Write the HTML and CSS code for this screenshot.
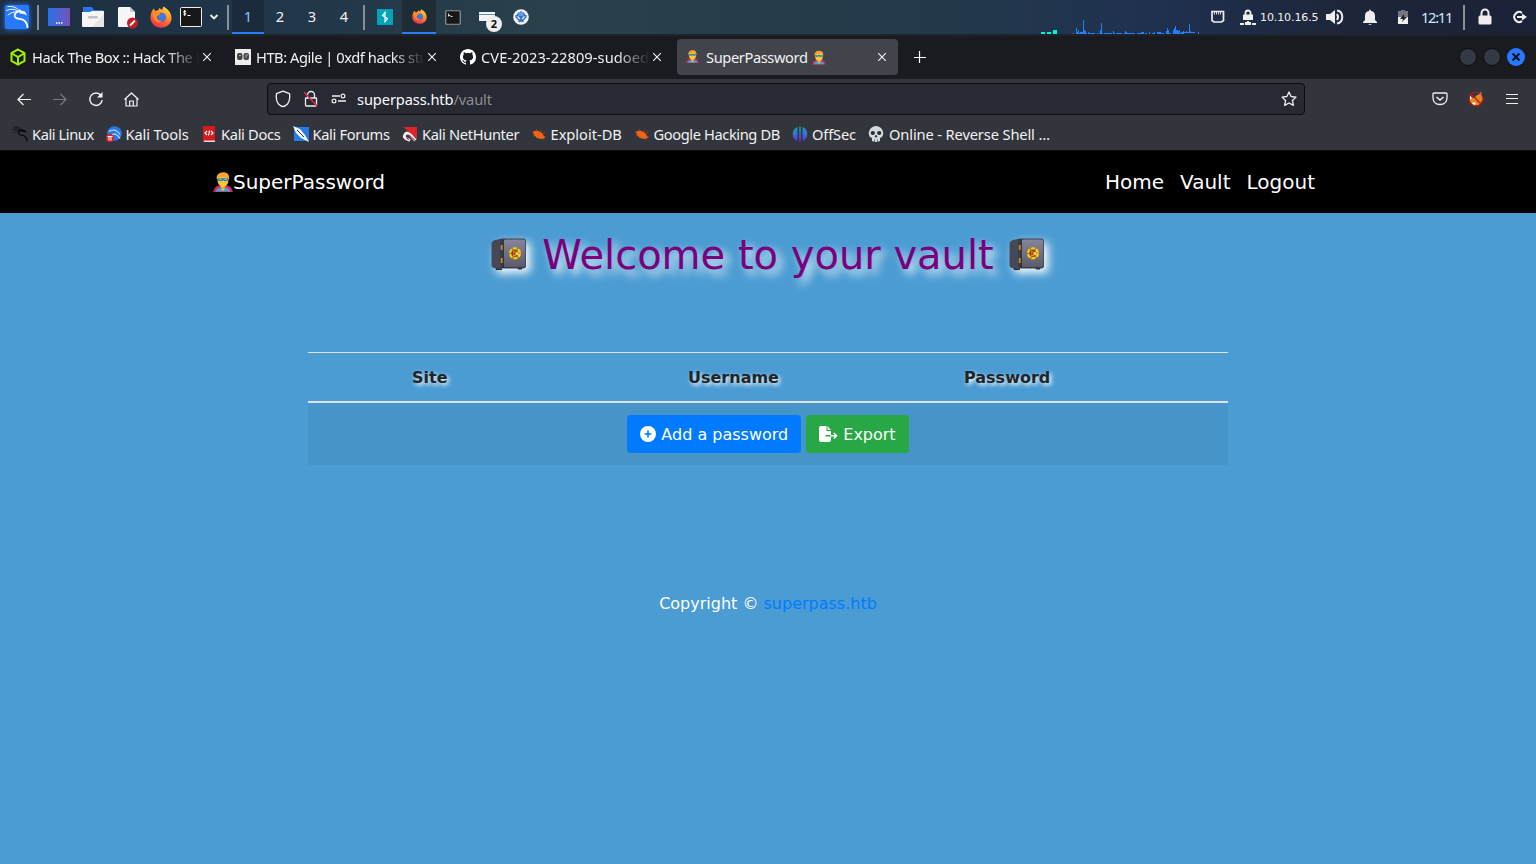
FILE: index.html
```html
<!DOCTYPE html>
<html lang="en">
<head>
<meta charset="utf-8">
<title>SuperPassword</title>
<link rel="stylesheet" href="styles.css">
</head>
<body>
<svg class="defs" aria-hidden="true">
  <defs>
    <linearGradient id="desk"><stop stop-color="#2872e8"/><stop offset="1" stop-color="#7752b8"/></linearGradient>
    <linearGradient id="fire" x1=".8" y1="0" x2=".3" y2="1"><stop stop-color="#ffe040"/><stop offset=".45" stop-color="#ff8b22"/><stop offset="1" stop-color="#ee2852"/></linearGradient>
    <linearGradient id="off" x1="0" y1="0" x2="0" y2="1"><stop stop-color="#1c9ba8"/><stop offset=".5" stop-color="#3276d2"/><stop offset="1" stop-color="#6c20d8"/></linearGradient>
    <linearGradient id="metal" x1="0" y1="0" x2="0" y2="1"><stop stop-color="#85869a"/><stop offset="1" stop-color="#5a5b6b"/></linearGradient>
  </defs>
  <symbol id="dragon" viewBox="0 0 24 24">
    <path d="M3 1.500C8 1 12 2.500 14.500 6M1.500 5.500C6 3.500 10 4 13.500 6.500M3 10c3-2.500 6-3.500 10-3" fill="none" stroke="currentColor" stroke-width="1" stroke-linecap="round"/>
    <path d="M13 6.500c-3 1.500-4.500 4-2.500 6 2 1.700 5.500 1 8 2.500 2.500 1.500 3.500 3.500 4 7" fill="none" stroke="currentColor" stroke-width="1.800" stroke-linecap="round"/>
    <path d="M13 6l2-2 1 1.500 4 1 2 4-3-1.500-4-.5z" fill="currentColor"/>
  </symbol>
  <symbol id="firefox" viewBox="0 0 22 22">
    <path d="M2 5l1.500-2.500L5.500 5l3-1 1-2L12 4l1.500-3.500C18 3 21.500 7 21.500 12c0 6-5 9.700-10.500 9.700S.500 18 .500 11.500C.500 8.500 1.300 6.500 2 5z" fill="url(#fire)"/>
    <circle cx="11" cy="11.500" r="4.800" fill="#5949c9"/><circle cx="12" cy="11" r="3.800" fill="#397be8"/>
    <path d="M2 7c3-1.500 5 0 8.500.500-1 2-3.500 2-3.500 3.500 0 3 3 4.500 6 3.500-3 3-8 1.500-9-1.500" fill="#ff8a22"/>
  </symbol>
  <symbol id="hero" viewBox="0 0 20 20">
    <path d="M5 13.500h10l3 2 2 4.500H0l2-4.500z" fill="#d52757"/>
    <path d="M2.800 19.500c.2-3 3-4 7.200-4s7 1 7.200 4z" fill="#4a9bd8"/>
    <path d="M7.500 12h5v3L10 17.500 7.500 15z" fill="#f0b030"/>
    <ellipse cx="10" cy="8.500" rx="5.400" ry="6.300" fill="#fac63c"/>
    <path d="M4 8C2.500 3 6 .2 10.500.2c5 0 6.500 4 5.200 8.300L14.500 5H7L5.200 6.500z" fill="#fba32c"/>
    <path d="M4.600 6.700c3-.5 7.800-.5 10.800 0-.2 3-3.800 3-5.400 1.500-1.800 1.500-5.200 1.500-5.400-1.500z" fill="#267ca0"/>
    <path d="M6.500 7.600h1.800M11.700 7.600h1.800" stroke="#9edcf0"/>
    <path d="M7.500 17h5L10 19z" fill="#f5c13a"/>
  </symbol>
  <symbol id="vault" viewBox="0 0 36 33">
    <path d="M4 29h7v3H5zM26 29h5v2.500h-4z" fill="#292a34"/>
    <path d="M4 2l7-1.500v31L3.500 30Q.5 29.500.5 27V6q0-3 3.500-4z" fill="#464857"/>
    <rect x="9" y=".5" width="26" height="30" rx="3" fill="#3b3c49"/>
    <rect x="12.500" y="1.500" width="21.800" height="27.500" rx="2" fill="url(#metal)"/>
    <path d="M10.800 7v5M10.800 20v5" stroke="#c18c20" stroke-width="2"/>
    <path d="M12.300 2v28" stroke="#20212b" stroke-width=".8"/>
    <circle cx="24" cy="15.500" r="6.200" fill="#a8760f"/>
    <circle cx="24" cy="15.200" r="5" fill="none" stroke="#f6cd35" stroke-width="2" stroke-dasharray="4 1.200"/>
    <circle cx="24" cy="15.500" r="3.300" fill="#8b4514"/>
    <path d="M22 13.500l4 .5 4-2.500-3 3.500 2.500 3-4-1-3 1.500z" fill="#f6d044"/><path d="M22.500 14l2.500.5-1 3-2-1z" fill="#c43c24"/>
  </symbol>
  <symbol id="bug" viewBox="0 0 16 16">
    <path d="M1 6l4 1M5 3l2 3M10 4v3M14 6l-3 2M2 10l4-1M5 12l3-2M12 14l-1-3M15 11h-4" stroke="#a94c25" stroke-width=".8"/>
    <path d="M2 6C5 3.500 11 5 14 12c-4 2-10.500.5-12-6z" fill="#f26413"/>
  </symbol>
  <symbol id="close" viewBox="0 0 10 10"><path d="M1.200 1.200l7.600 7.600M8.800 1.200L1.200 8.800" stroke="#f4f4f6" stroke-width="1.100"/></symbol>
  <symbol id="padlock" viewBox="0 0 14 18"><path d="M3.500 8V5a3.500 3.500 0 0 1 7 0v3" fill="none" stroke="#eee" stroke-width="2"/><rect x=".5" y="7.500" width="13" height="9" rx="1.500" fill="#eee"/></symbol>
</svg>

<header class="panel">
  <div class="menu"><span class="kali"><svg width="24" height="24"><use href="#dragon"/></svg></span></div>
  <i class="sep first"></i>
  <div class="launch"><svg width="22" height="18"><rect width="22" height="18" rx="1" fill="url(#desk)"/><path d="M8 15h1.500M10.500 15h1.500M13 15h1.500" stroke="#fff" stroke-width="1.500"/></svg></div>
  <div class="launch"><svg width="22" height="20"><path d="M1 0h9l2 3h9v5H1z" fill="#2875e8"/><path d="M0 5h8l2-1h12v15q0 1-1 1H1q-1 0-1-1z" fill="#f5f5f5"/><path d="M22 7v13H10z" fill="#e5e5e5"/><rect x="6" y="9" width="10" height="2.500" rx="1" fill="#c3c3c3"/></svg></div>
  <div class="launch"><svg class="doc" width="22" height="23"><path d="M2 1h11l5 5v15H2q-1 0-1-1V2z" fill="#f7f7f7"/><path d="M13 1v5h5z" fill="#c8c8c8"/><circle cx="15.500" cy="17" r="5.500" fill="#c61b20"/><path d="M13 19.500l5-5" stroke="#fff" stroke-width="2"/></svg></div>
  <div class="launch"><svg width="22" height="22"><use href="#firefox"/></svg></div>
  <div class="launch term"><svg width="22" height="20"><rect x=".5" y=".5" width="21" height="19" rx="1" fill="#181818" stroke="#eee"/><path d="M6 4.500c-3-1-3 1.500-1.300 1.500s2 2.500-1.200 1.500M4.700 3v6M7.500 8.500h3" fill="none" stroke="#fff"/></svg></div>
  <div class="chev"><svg width="10" height="8"><path d="M1.500 2L5 5.500 8.500 2" fill="none" stroke="#eee" stroke-width="1.800"/></svg></div>
  <i class="sep second"></i>
  <div class="ws active">1</div><div class="ws">2</div><div class="ws">3</div><div class="ws">4</div>
  <i class="sep third"></i>
  <div class="task"><svg width="16" height="16"><rect width="16" height="16" fill="#00a3ba"/><path d="M8.700 2.500L5.500 6.500l2.500 1v-4M7.500 13.500l3-4-2.500-1.500v4.500M5.500 6.500l5 3" fill="none" stroke="#fff" stroke-width="1.200"/></svg></div>
  <div class="task active"><svg width="15" height="15"><use href="#firefox"/></svg></div>
  <div class="task"><svg width="16" height="15"><rect x=".75" y=".75" width="14.500" height="13.500" rx="1" fill="#171719" stroke="#929497" stroke-width="1.200"/><path d="M3.500 3.500v3M4 5.500h1.500M5.500 6.500h2" stroke="#ddd"/></svg></div>
  <div class="task group"><svg width="16" height="10"><path d="M0 0h16v2H0z" fill="#f3f4f5"/><path d="M0 2h16v1H0z" fill="#5f8eab"/><path d="M0 3h16v6H0z" fill="#f3f4f5"/></svg><span class="count">2</span></div>
  <div class="task"><svg width="16" height="16"><circle cx="8" cy="8" r="7.800" fill="#f2f4f8"/><path d="M8 2v11M6 3v4l2 2.500L10 7V3M3 6v2l3 3h4l3-3V6M4.500 4.500v3M11.500 4.500v3M5.500 13l2.500-2 2.500 2" fill="none" stroke="#276dc5" stroke-width="1.300"/></svg></div>
  <div class="graph"><svg width="160" height="34" shape-rendering="crispEdges"><path d="M1 33h4M7 33h4" stroke="#00f7d4" stroke-width="2"/><path d="M13 30h4v4h-4z" fill="#00f7d4"/><path d="M33 34v-1h1v1zm3 0v-6h1v4h1v-2h1v3h1v-1h3V20h1v10h1v1h1v2h1v1zM48 32h1v1h6v1h-7zM57 33h1v1h-1zM59 34v-1h1v-3h1v-7h1v10h1v1zM64 33h8v1h-8zM73 34v-3h1v2h1v1zM76 33h6v1h-6zM84 33h1v-2h1v1h1v1h8v1H84zM97 33h4v-1h3v2h-7zM105 33h2v1h-2zM109 34v-2h1v2zm3 0v-1h2v-1h1v2zM117 32h4v1h3v1h-7zM126 34v-3h1v-3h1v2h1v3h2v1zM133 34v-4h1v-2h1v-2h1v4h2v1h1v-1h1v3h1v-1h2v-1h1v1h2v-1h1v1h2v-8h1v7h1v1h4v1zM158 32h1v2h-1z" fill="#277ff8"/></svg></div>
  <div class="tray eth"><svg width="16" height="14"><path d="M2 1.500h11.500v9l-2 1.500H4l-2-1.500z" fill="none" stroke="#eee" stroke-width="1.700"/><path d="M4.500 2v2.500M6.500 2v2.500M8.500 2v2.500M10.500 2v2.500" stroke="#ddd"/></svg></div>
  <div class="tray vpn"><svg width="16" height="17"><path d="M5.500 6V4a2.500 2.500 0 0 1 5 0v2" fill="none" stroke="#eee" stroke-width="1.800"/><path d="M3 5.500h10V11H3zM7 12h2v1h2v3H5v-3h2zM0 14h4v2H0zM12 14h4v2h-4z" fill="#eee"/></svg></div>
  <div class="ip">10.10.16.5</div>
  <div class="tray vol"><svg width="18" height="16"><path d="M0 5h4l5-4v14l-5-4H0z" fill="#eee"/><path d="M11 5q2 3 0 6M11 1.500c7 1 7 12 0 13" fill="none" stroke="#eee" stroke-width="2"/></svg></div>
  <div class="tray bell"><svg width="14" height="16"><path d="M7 0l1 2q4 .500 4 5v4l2 2v1H0v-1l2-2V7q0-4.500 4-5zM5 15h4l-2 1z" fill="#eee"/></svg></div>
  <div class="tray bat"><svg width="10" height="15"><path d="M3 0h4v1h3v6H0V1h3z" fill="#747780"/><path d="M0 7h10v7H0z" fill="#f0f0f0"/><path d="M6 4L2 9h3l-1 3 5-5H6z" fill="#202431"/></svg></div>
  <div class="clock">12:11</div>
  <i class="sep fourth"></i>
  <div class="tray lock"><svg width="14" height="18"><use href="#padlock"/></svg></div>
  <div class="tray exit"><svg width="16" height="14"><path d="M10 2.800A5 5 0 1 0 10 11.200" fill="none" stroke="#eee" stroke-width="2"/><path d="M5 6h5V3.500L15 7l-5 3.500V8H5z" fill="#eee"/></svg></div>
</header>

<nav class="tabs">
  <div class="tab t1"><svg width="16" height="18" viewBox="0 0 16 18"><path d="M8 1.500l6.500 3.700v7.600L8 16.500l-6.500-3.700V5.200zM2 5.500l6 3.500 6-3.500M8 9v7" fill="none" stroke="#9fef00" stroke-width="2"/></svg><span class="title fade">Hack The Box :: Hack The B</span><svg class="x" width="10" height="10"><use href="#close"/></svg></div>
  <div class="tab t2"><svg width="16" height="16"><rect width="16" height="16" fill="#eee"/><rect x="2" y="4" width="5.500" height="7" rx="2" fill="#444"/><rect x="8.500" y="4" width="5.500" height="7" rx="2" fill="#444"/><path d="M4 6.500h2M10 6h3M10 8h2" stroke="#aaa"/></svg><span class="title fade">HTB: Agile | 0xdf hacks stu</span><svg class="x" width="10" height="10"><use href="#close"/></svg></div>
  <div class="tab t3"><svg width="16" height="16" viewBox="0 0 16 16"><path fill="#fff" d="M8 0C3.580 0 0 3.580 0 8c0 3.540 2.290 6.530 5.470 7.590.4.070.55-.17.55-.38 0-.19-.01-.82-.01-1.490-2.010.37-2.530-.49-2.690-.94-.09-.23-.48-.94-.82-1.130-.28-.15-.68-.52-.01-.53.63-.01 1.080.58 1.230.82.72 1.210 1.870.87 2.330.66.07-.52.28-.87.51-1.070-1.780-.2-3.640-.89-3.640-3.950 0-.87.31-1.590.82-2.150-.08-.2-.36-1.020.08-2.120 0 0 .67-.21 2.200.82a7.600 7.600 0 0 1 4 0c1.530-1.040 2.200-.82 2.200-.82.44 1.100.16 1.920.08 2.120.51.56.82 1.270.82 2.150 0 3.070-1.870 3.750-3.650 3.950.29.25.54.73.54 1.480 0 1.070-.01 1.930-.01 2.200 0 .21.15.46.55.38A8 8 0 0 0 16 8c0-4.420-3.580-8-8-8z"/></svg><span class="title fade">CVE-2023-22809-sudoed</span><svg class="x" width="10" height="10"><use href="#close"/></svg></div>
  <div class="tab t4"><svg class="hero1" width="13" height="15"><use href="#hero"/></svg><span class="title">SuperPassword</span><svg class="hero2" width="14" height="15"><use href="#hero"/></svg><svg class="x" width="10" height="10"><use href="#close"/></svg></div>
  <svg class="plus" width="12" height="12"><path d="M5.500 0v12M0 6.500h12" stroke="#fff" stroke-width="1.200"/></svg>
  <div class="controls"><i></i><i></i><b><svg width="8" height="8"><path d="M.5.5l7 7M7.500.5l-7 7" stroke="#12141d" stroke-width="2.200"/></svg></b></div>
</nav>

<div class="toolbar">
  <svg class="tool" width="16" height="16"><path d="M15 8.500H2M7.500 3L2 8.500 7.500 14" fill="none" stroke="#f4f4f4" stroke-width="1.200"/></svg>
  <svg class="tool" width="16" height="16"><path d="M1 8.500h13M8.500 3L14 8.500 8.500 14" fill="none" stroke="#777a80" stroke-width="1.200"/></svg>
  <svg class="tool" width="16" height="16"><path d="M13 4.500A6.200 6.200 0 1 0 14.200 9" fill="none" stroke="#f4f4f4" stroke-width="1.400"/><path d="M14.500 1v5.500H9z" fill="#f4f4f4"/></svg>
  <svg class="tool" width="16" height="16"><path d="M.5 8.500l7-6.500 7 6.500M2 7.500V15h11V7.500M5.700 14.500V10h3.600v4.500" fill="none" stroke="#f4f4f4" stroke-width="1.200" stroke-linejoin="round"/></svg>
  <div class="address">
    <svg width="16" height="18"><path d="M8 1.200l6.500 2.500q1 7-2 10.300Q10 16.500 8 16.500T3.500 14Q.5 10.700 1.500 3.700z" fill="none" stroke="#f2f2f2" stroke-width="1.300" stroke-linejoin="round"/></svg>
    <svg width="16" height="18"><path d="M4.500 8V5a3.500 3.500 0 0 1 7 0v3M3 8h10q.5 0 .5.500V15q0 1-1 1h-9q-1 0-1-1V8.500Q2.500 8 3 8z" fill="none" stroke="#eee" stroke-width="1.300"/><path d="M1 2l13 14" stroke="#e91f4f" stroke-width="1.500"/></svg>
    <svg width="16" height="14"><path d="M1 4h8M7 9h8" stroke="#eee" stroke-width="1.300"/><circle cx="12" cy="4" r="1.900" fill="none" stroke="#eee" stroke-width="1.200"/><circle cx="3" cy="9" r="1.900" fill="none" stroke="#eee" stroke-width="1.200"/></svg>
    <span class="url">superpass.htb<span>/vault</span></span>
    <svg class="star" width="16" height="16"><path d="M8 1l2.100 4.500 4.900.600-3.600 3.400 1 4.900L8 12l-4.400 2.400 1-4.900L1 6.100l4.900-.6z" fill="none" stroke="#eee" stroke-width="1.300" stroke-linejoin="round"/></svg>
  </div>
  <div class="right-tools">
    <svg width="16" height="14"><path d="M2 1h12q1 0 1 1v4q-.5 6.500-7 6.500T1 6V2q0-1 1-1z" fill="none" stroke="#eee" stroke-width="1.300"/><path d="M4.500 5L8 8l3.500-3" fill="none" stroke="#eee" stroke-width="1.500"/></svg>
    <svg width="16" height="16"><path d="M2 6l4 1 3-3 4-1 2 5-4 6-5 .5-4-3z" fill="#e08a1c"/><path d="M2 4l2 3-2 2zM13 1l1 4-3-2zM5 11l3 1-1 2-3-1z" fill="#eee"/><circle cx="8" cy="8" r="7" fill="none" stroke="#bd1721" stroke-width="1.200"/><path d="M3 3l10 10" stroke="#bd1721" stroke-width="1.400"/></svg>
    <svg width="14" height="12"><path d="M1 1.500h12M1 5.500h12M1 10.500h12" stroke="#eee" stroke-width="1.200"/></svg>
  </div>
</div>

<div class="bookmarks">
  <div class="bm b1"><svg class="black" width="16" height="16"><use href="#dragon"/></svg><span>Kali Linux</span></div>
  <div class="bm b2"><svg width="16" height="16"><circle cx="8.500" cy="7.500" r="7.300" fill="#2878e5"/><path d="M3 5.500q6-4 11 3M6 8.500q4-2 8 4" fill="none" stroke="#d9eaff" stroke-width="1.100"/><circle cx="4" cy="12" r="4" fill="#d8232a"/><path d="M1.500 10.500h5M3 10.500v4M5 10.500v4" stroke="#fff"/></svg><span>Kali Tools</span></div>
  <div class="bm b3"><svg width="16" height="16"><path d="M2 0h12v16H2z" fill="#d7191e"/><path d="M3 14.500h11V16H3z" fill="#ddd"/><path d="M6 5L4 7l2 2M10 5l2 2-2 2M8.500 4.500l-1 5" fill="none" stroke="#fff" stroke-width="1.200"/></svg><span>Kali Docs</span></div>
  <div class="bm b4"><svg width="16" height="16"><path d="M1 1h15v14H1z" fill="#267be7"/><path d="M0 0l7 3 5 6 4 7-8-4-5-5z" fill="#f3f6fb"/><path d="M4 4l7 7" stroke="#31343a"/></svg><span>Kali Forums</span></div>
  <div class="bm b5"><svg width="16" height="16"><path d="M1 1h14v12z" fill="#de2427"/><path d="M13.500 14.500L8.500 9q-3.500-3.500-5.500-.5T5 13l3 1.500" fill="none" stroke="#eee" stroke-width="3"/><path d="M14 15.500L9 10.500q-3-2.500-4 0t2 3" fill="none" stroke="#8d1830" stroke-width="1"/></svg><span>Kali NetHunter</span></div>
  <div class="bm b6"><svg width="16" height="16"><use href="#bug"/></svg><span>Exploit-DB</span></div>
  <div class="bm b7"><svg width="16" height="16"><use href="#bug"/></svg><span>Google Hacking DB</span></div>
  <div class="bm b8"><svg width="16" height="16"><path d="M5.500 1v14C-1 13-1 3 5.500 1zM7.200.5h1.600v15H7.200zM10.500 1v14C17 13 17 3 10.500 1z" fill="url(#off)"/></svg><span>OffSec</span></div>
  <div class="bm b9"><svg width="16" height="16"><path d="M2 11Q-1 6 3 2q5-4 10 0 4 4 1 9l-2 1v3q-4 2-8 0v-3z" fill="#d2dbe0"/><circle cx="4.800" cy="7" r="2.100" fill="#292b31"/><circle cx="11.200" cy="7" r="2.100" fill="#292b31"/><path d="M8 9l1 2H7zM6.500 13.500V16M9.500 13.500V16" fill="#292b31" stroke="#292b31" stroke-width=".6"/></svg><span>Online - Reverse Shell …</span></div>
</div>

<main class="site">
  <nav class="navbar"><a class="brand"><svg width="20" height="20"><use href="#hero"/></svg>SuperPassword</a><div class="links"><a>Home</a><a>Vault</a><a>Logout</a></div></nav>
  <h1><svg class="safe" width="36" height="33"><use href="#vault"/></svg><span>Welcome to your vault</span><svg class="safe" width="36" height="33"><use href="#vault"/></svg></h1>
  <table>
    <thead><tr><th></th><th>Site</th><th>Username</th><th>Password</th></tr></thead>
    <tbody><tr><td colspan="4"><div class="actions">
      <a class="btn primary"><svg width="16" height="16"><circle cx="8" cy="8" r="8" fill="#fff"/><path d="M8 4.500v7M4.500 8h7" stroke="#007bff" stroke-width="1.600"/></svg><span>Add a password</span></a>
      <a class="btn success"><svg width="19" height="16"><path d="M2 0h5.500v5h4.500v4H6.500v1.500H12V14q0 2-2 2H2q-2 0-2-2V2q0-2 2-2zM8.500 0L12 4H8.500z" fill="#fff"/><path d="M11.500 9.700h6M14.800 7l2.900 2.700-2.900 2.800" fill="none" stroke="#fff" stroke-width="1.400"/></svg><span>Export</span></a>
    </div></td></tr></tbody>
  </table>
  <footer>Copyright © <a>superpass.htb</a></footer>
</main>
</body>
</html>
```

FILE: styles.css
```css
* { box-sizing: border-box; }
body { margin: 0; width: 1536px; height: 864px; overflow: hidden; background: #4b9cd3; font: 14.67px "Noto Sans", sans-serif; color: #f1f1f3; }
svg { display: block; flex: none; }
.defs { position: absolute; width: 0; height: 0; }

.panel { height: 34px; display: flex; align-items: center; background: linear-gradient(90deg, #1e2f40, #20364a 18%, #2a404a 36%, #24394a 60%, #1f3150 75%, #1d2539 88%, #1b2136); }
.menu { width: 34px; height: 34px; display: flex; align-items: center; justify-content: center; }
.kali { width: 24px; height: 24px; background: #2779ff; box-shadow: 0 0 5px #2779ff; border-radius: 2px; color: #fff; }
.sep { width: 2px; height: 25px; background: #8a8f98; flex: none; }
.first { margin: 0 3px; }
.second { margin: 0 3px 0 7px; }
.third { margin: 0 3px; }
.fourth { margin-right: 13px; }
.launch { width: 34px; display: flex; justify-content: center; }
.doc { margin-left: 2px; }
.term { width: 26px; }
.chev { width: 16px; padding-left: 5px; }
.ws { width: 32px; height: 34px; line-height: 33px; text-align: center; font-size: 14.67px; }
.ws.active { background: #1c2a3e; border-bottom: 2px solid #277ffb; color: #8dc4ff; }
.task { width: 34px; height: 34px; display: flex; align-items: center; justify-content: center; position: relative; }
.task.active { background: #1e2c35; border-bottom: 2px solid #277ffb; }
.count { position: absolute; left: 16px; top: 16px; width: 16px; height: 16px; border-radius: 50%; background: #eee; color: #111; font: bold 11px/16px "Noto Sans", sans-serif; text-align: center; }
.graph { width: 160px; margin-left: auto; }
.tray { display: flex; flex: none; justify-content: center; }
.eth { width: 35px; }
.vpn { width: 25px; }
.ip { width: 63px; font: 11px "DejaVu Sans", sans-serif; letter-spacing: -.1px; white-space: nowrap; }
.vol { width: 23px; }
.bell { width: 47px; }
.bat { width: 20px; }
.clock { width: 50px; padding-left: 8px; font-size: 14.67px; letter-spacing: -1.3px; line-height: 18px; padding-bottom: 1px; color: #d3e8ff; }
.lock { width: 14px; margin-right: 19px; }
.exit { width: 25px; padding-right: 8px; }

.tabs { height: 45px; padding-bottom: 1px; display: flex; align-items: center; border-top: 2px solid #1d252b; background: #1a1b20; }
.tab { height: 36px; display: flex; align-items: center; white-space: nowrap; }
.title { flex: none; margin-left: 5px; letter-spacing: -.4px; }
.fade { -webkit-mask-image: linear-gradient(90deg, #000 80%, transparent); mask-image: linear-gradient(90deg, #000 80%, transparent); }
.x { margin-left: 3px; }
.t1 { width: 225px; padding-left: 10px; }
.t1 .title { width: 168px; margin-left: 6px; letter-spacing: -.47px; }
.t1 .x { margin-left: 2px; }
.t2 { width: 225px; padding-left: 10px; }
.t2 .title { width: 169px; letter-spacing: -.45px; }
.t2 .x { margin-left: 2px; }
.t3 { width: 227px; padding-left: 10px; }
.t3 .title { width: 169px; letter-spacing: .05px; }
.t3 .x { margin-left: 2px; }
.t4 { width: 221px; border-radius: 4px; background: #42444b; padding: 0 11px 0 9px; }
.hero1 { margin-bottom: 1px; }
.t4 .title { margin-left: 7px; }
.hero2 { margin-left: 4px; }
.t4 .x { margin-left: auto; }
.plus { margin-left: 16px; }
.controls { display: flex; gap: 6px; margin: 0 11px 0 auto; }
.controls i, .controls b { width: 18px; height: 18px; border-radius: 50%; background: #343945; border: 1px solid #0c0d10; }
.controls b { display: flex; align-items: center; justify-content: center; background: #2777ff; border: 0; }

.toolbar { height: 40px; padding: 0 17px 0 16px; display: flex; align-items: center; background: #33353c; }
.tool { margin-right: 20px; }
.address { width: 1038px; height: 32px; margin-left: 107px; padding: 0 7px; display: flex; align-items: center; gap: 12px; border: 1px solid #0b0c10; border-radius: 4px; background: #272933; flex: none; }
.url { margin-left: -2px; color: #fbfbfe; letter-spacing: -.12px; }
.url span { color: #8b8d95; }
.star { margin-left: auto; }
.right-tools { flex: 1; display: flex; align-items: center; justify-content: flex-end; gap: 21px; }
.right-tools svg:nth-child(2) { margin-left: -1px; }
.bookmarks { height: 32px; padding: 0 0 1px 12px; display: flex; align-items: center; background: #33353c; border-bottom: 1px solid #0d0e13; }
.bm { display: flex; gap: 4px; align-items: center; white-space: nowrap; flex: none; }
.black { color: #050505; }
.b1 { width: 93.500px; letter-spacing: -.42px; }
.b2 { width: 95.500px; letter-spacing: -.12px; }
.b3 { width: 91.500px; letter-spacing: -.32px; }
.b4 { width: 109.500px; letter-spacing: -.35px; }
.b5 { width: 128.500px; letter-spacing: -.34px; }
.b6 { width: 103px; letter-spacing: -.02px; }
.b7 { width: 158.500px; letter-spacing: -.4px; }
.b8 { width: 76px; letter-spacing: -.15px; }
.b9 { gap: 5px; letter-spacing: -.13px; }

.site { font: 16px/24px "DejaVu Sans", sans-serif; color: #fff; }
.navbar { height: 62px; padding: 0 221px 0 213px; display: flex; align-items: center; justify-content: space-between; background: #000; font-size: 20px; }
.brand { display: flex; align-items: center; }
.links { display: flex; gap: 16px; }
h1 { margin: 17px 0 73px; height: 49px; display: flex; align-items: center; justify-content: center; gap: 15px; font-size: 40px; font-weight: 400; line-height: 49px; color: #7b007b; text-shadow: 5px 5px 10px #fff; }
h1 span { padding-top: 2px; }
.safe { filter: drop-shadow(4px 4px 5px #fff); }
table { width: 920px; margin: 0 auto; border-collapse: separate; border-spacing: 0; table-layout: fixed; }
th { width: 30%; height: 51px; padding: 2px 12px 0; border-top: 1px solid #dee2e6; border-bottom: 2px solid #dee2e6; text-align: left; color: #212529; text-shadow: 2px 2px 4px #fff; }
th:first-child { width: 10%; }
td { height: 62px; padding: 0; background: rgba(0, 0, 0, .05); }
.actions { display: flex; justify-content: center; gap: 5px; }
.btn { height: 38px; padding: 0 13px; display: flex; align-items: center; gap: 5px; border-radius: 4px; }
.btn span { padding-top: 2px; }
.primary { background: #007bff; }
.success { background: #28a745; }
footer { margin-top: 127px; text-align: center; }
footer a { color: #007bff; }
```
